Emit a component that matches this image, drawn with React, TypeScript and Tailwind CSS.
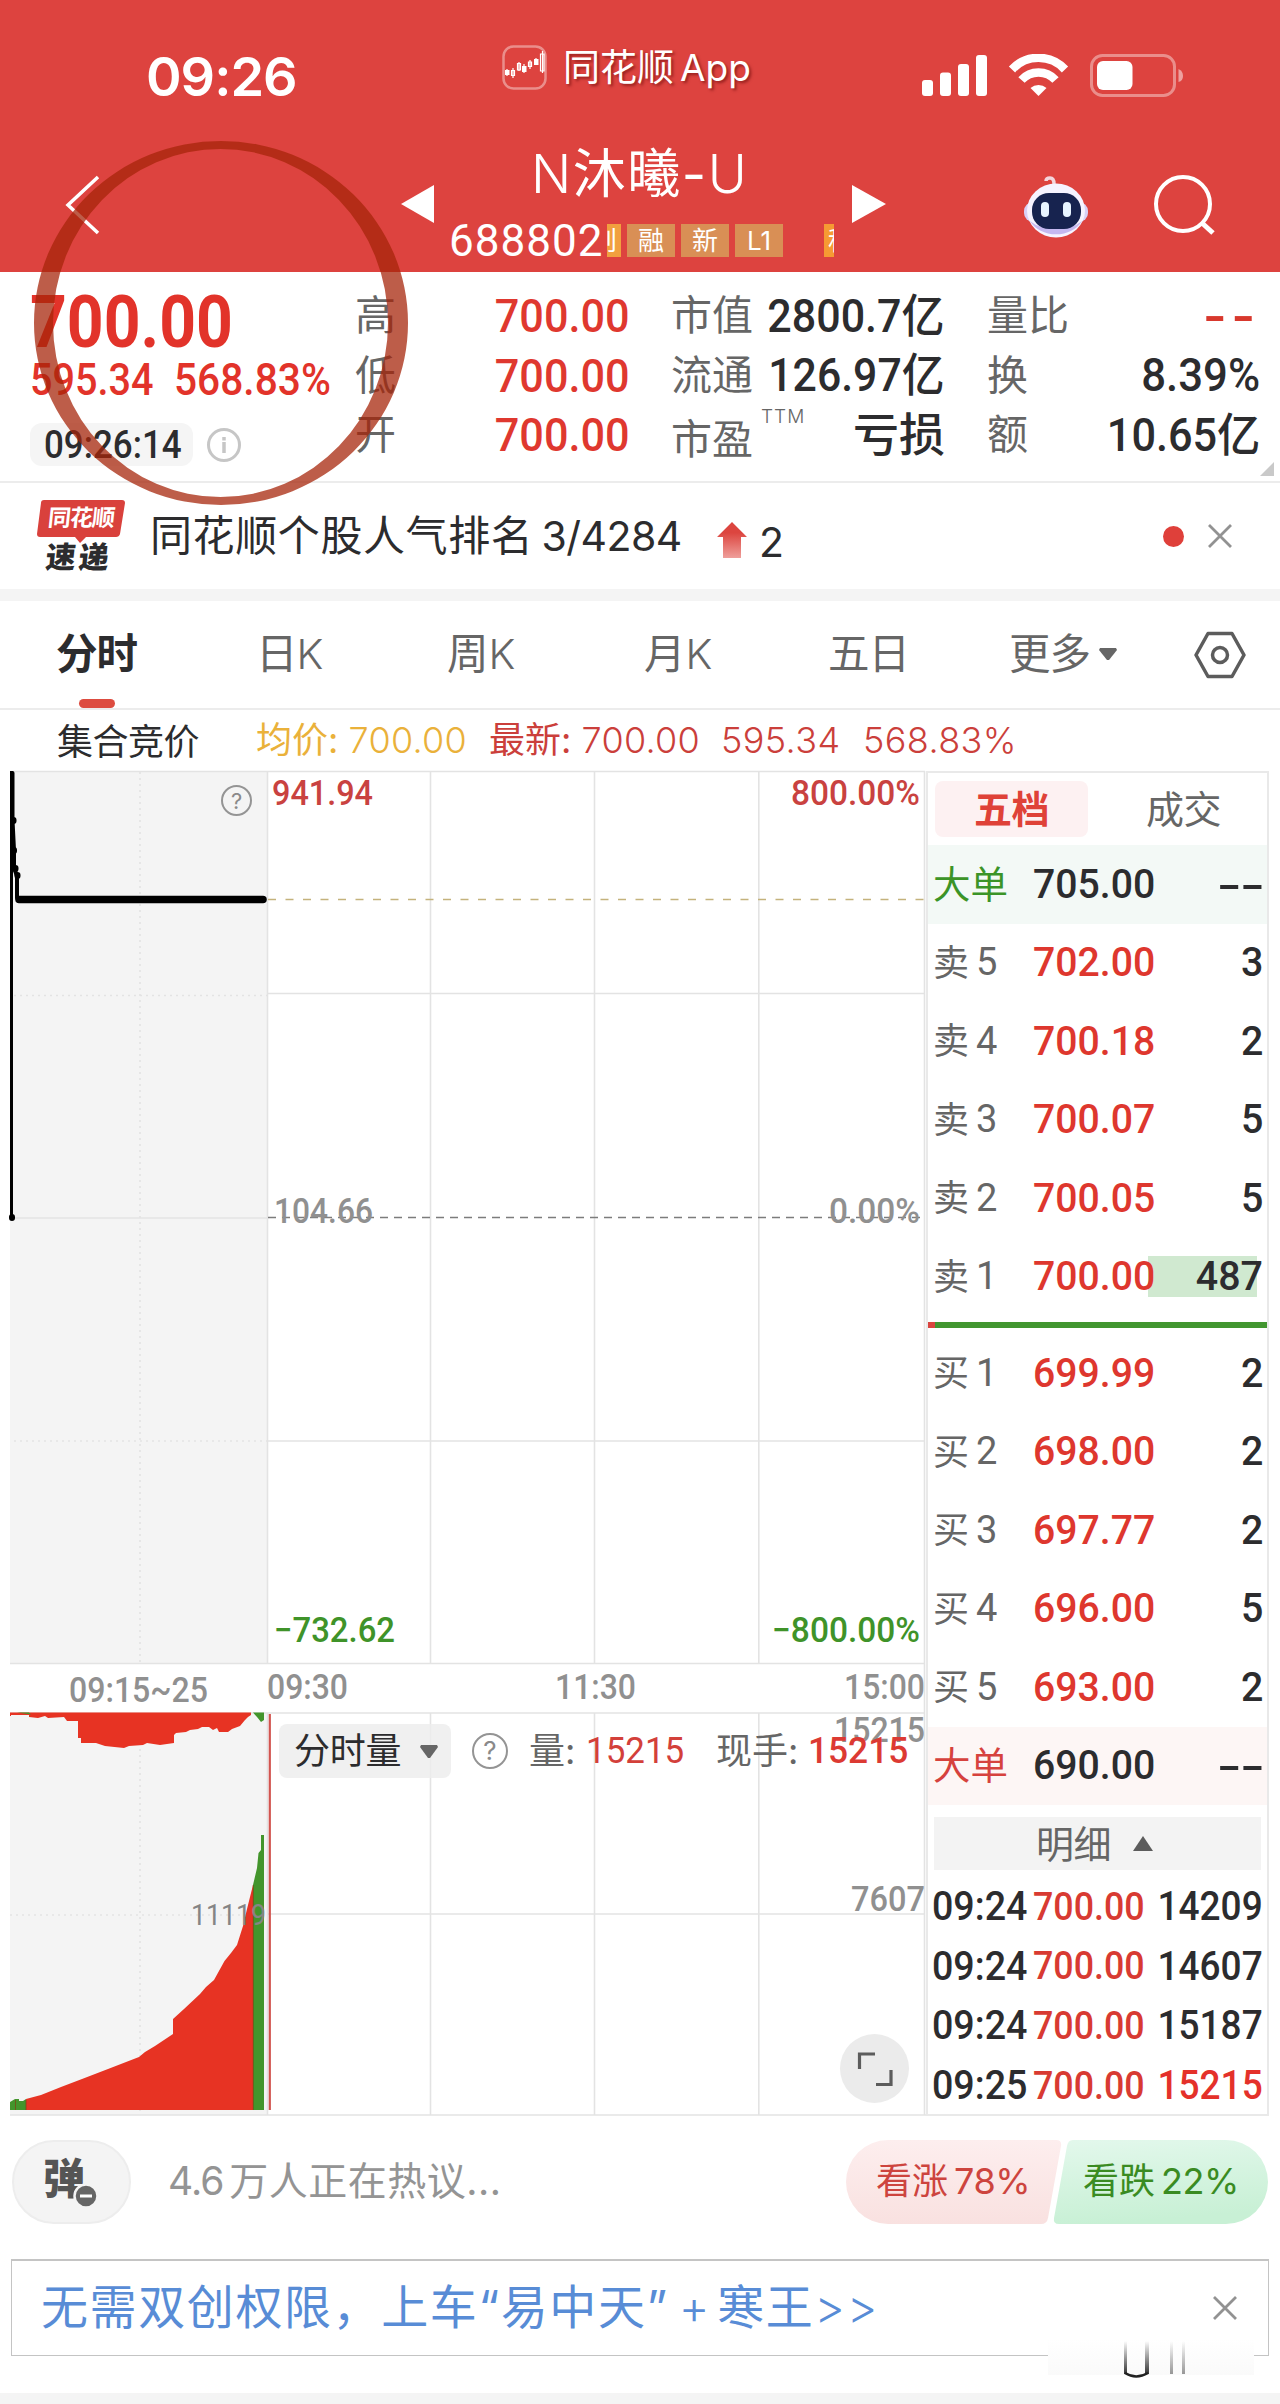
import type { ReactNode } from "react";
import { clsx } from "clsx";

interface Level {
  label: string;
  index: number;
  price: string;
  volume: string;
}

const asks: Level[] = [
  { label: "卖", index: 5, price: "702.00", volume: "3" },
  { label: "卖", index: 4, price: "700.18", volume: "2" },
  { label: "卖", index: 3, price: "700.07", volume: "5" },
  { label: "卖", index: 2, price: "700.05", volume: "5" },
  { label: "卖", index: 1, price: "700.00", volume: "487" },
];

const bids: Level[] = [
  { label: "买", index: 1, price: "699.99", volume: "2" },
  { label: "买", index: 2, price: "698.00", volume: "2" },
  { label: "买", index: 3, price: "697.77", volume: "2" },
  { label: "买", index: 4, price: "696.00", volume: "5" },
  { label: "买", index: 5, price: "693.00", volume: "2" },
];

const trades = [
  { time: "09:24", price: "700.00", volume: "14209" },
  { time: "09:24", price: "700.00", volume: "14607" },
  { time: "09:24", price: "700.00", volume: "15187" },
  { time: "09:25", price: "700.00", volume: "15215", up: true },
];

function Num({ className, children }: { className?: string; children: ReactNode }) {
  return (
    <span
      className={clsx(
        "inline-block whitespace-nowrap font-['Roboto','Noto_Sans_CJK_SC',sans-serif] leading-none",
        className
      )}
    >
      {children}
    </span>
  );
}

function StatusBar() {
  return (
    <div className="flex h-[144px] items-start text-white">
      <div className="ml-[146px] mt-[50px] w-[356px] text-[54px] font-semibold leading-none tracking-[-1px]">09:26</div>
      <svg className="mt-[45px] h-[45px] w-[45px]" viewBox="0 0 45 45" fill="none" stroke="white">
        <rect x="1.5" y="1.5" width="42" height="42" rx="10" strokeWidth="2.5" opacity="0.4" />
        <path
          strokeWidth="1.2"
          d="M5 24v7M11 23v10M17 17v9M22 19v9M28 15v9M34 13v7M9.500 25.500h3v5h-3zM15.500 18.500h3v6.500h-3zM26.500 17h3v4.500h-3zM38.500 9h3.500v17h-3.500zM40.500 6v22"
        />
        <path fill="white" stroke="none" d="M3 25h4.500v5H3zM20 21h4.500v6H20zM32 14h4.500v6H32z" />
      </svg>
      <div className="ml-[16px] mt-[49px] w-[359px] whitespace-nowrap text-[37px] leading-none [text-shadow:2px_2px_3px_rgba(90,0,0,0.55)]">
        同花顺<span className="ml-1.5">App</span>
      </div>
      <svg className="mt-[54px] h-[44px] w-[262px]" viewBox="0 0 262 44" fill="white">
        <rect x="0" y="26" width="11" height="16" rx="3" />
        <rect x="18" y="18.500" width="11" height="23.500" rx="3" />
        <rect x="36" y="10" width="11" height="32" rx="3" />
        <rect x="54" y="1" width="11" height="41" rx="3" />
        <g fill="none" stroke="white" strokeWidth="8.500">
          <path d="M90 15.500a36 36 0 0 1 53 0" />
          <path d="M99.500 26a23 23 0 0 1 34 0" />
        </g>
        <path d="M108.500 34a12 12 0 0 1 16 0l-8 8z" />
        <rect x="169.500" y="1.500" width="83" height="40" rx="11" fill="none" stroke="white" strokeWidth="3" opacity="0.4" />
        <rect x="175" y="7" width="35.500" height="29" rx="6" />
        <path d="M256.500 15q4.500 2 4.500 7t-4.500 6z" opacity="0.5" />
      </svg>
    </div>
  );
}

function Tag({ className, children }: { className?: string; children: ReactNode }) {
  return (
    <span className={clsx("mr-1.5 flex h-[33px] shrink-0 items-center overflow-hidden text-[26px] leading-none", className)}>
      {children}
    </span>
  );
}

function RobotIcon() {
  return (
    <svg className="h-[66px] w-[66px]" viewBox="0 0 66 66">
      <path d="M31 10q0-6-4-6t-4 3" fill="none" stroke="#f3d5dc" strokeWidth="3.500" />
      <rect x="1" y="28" width="64" height="20" rx="9" fill="#d9d0f6" />
      <ellipse cx="33" cy="36.500" rx="29" ry="27" fill="#f6f3ff" />
      <path d="M7 47a29 24 0 0 0 52 0l-6 4q-20 8-40 0z" fill="#c5b8f0" />
      <rect x="9" y="19" width="49" height="36" rx="17" fill="#17234f" />
      <rect x="18" y="28" width="8" height="15" rx="4" fill="#e8f4ff" />
      <rect x="40" y="28" width="8" height="15" rx="4" fill="#e8f4ff" />
    </svg>
  );
}

function TitleBar() {
  return (
    <div className="flex h-[128px] items-start text-white">
      <svg className="ml-[64px] mt-[30px] h-[62px] w-[36px]" viewBox="0 0 36 62" fill="none" stroke="white" strokeWidth="3.500">
        <path d="M34 3L4 31l30 28" />
      </svg>
      <svg className="ml-[301px] mt-[41px] h-[38px] w-[33px]" viewBox="0 0 33 38" fill="white">
        <path d="M0 19L33 0v38z" />
      </svg>
      <div className="ml-[15px] w-[403px]">
        <div className="ml-[82px] whitespace-nowrap text-[53px] leading-[60px] tracking-[1.500px]">
          <span className="font-light">N</span>沐曦-<span className="font-light">U</span>
        </div>
        <div className="mt-[20px] flex h-[33px] items-center">
          <Num className="w-[158px] text-[44px] tracking-[1px]">688802</Num>
          <Tag className="w-[14px] justify-end bg-[#f1a03f] pr-1">创</Tag>
          <Tag className="w-[48px] justify-center bg-[#d98f55]">融</Tag>
          <Tag className="w-[48px] justify-center bg-[#d98f55]">新</Tag>
          <Tag className="mr-[41px] w-[48px] justify-center bg-[#d98f55]">L1</Tag>
          <Tag className="w-[10px] bg-[#f69a33]">
            <span className="ml-1">科</span>
          </Tag>
        </div>
      </div>
      <svg className="mt-[41px] h-[38px] w-[34px]" viewBox="0 0 34 38" fill="white">
        <path d="M0 0l34 19L0 38z" />
      </svg>
      <div className="ml-[137px] mt-[30px]">
        <RobotIcon />
      </div>
      <svg className="ml-[64px] mt-[30px] h-[62px] w-[64px]" viewBox="0 0 64 62" fill="none" stroke="white" strokeWidth="4">
        <circle cx="30" cy="30" r="27" />
        <path d="M49 49l11 10" strokeWidth="5" />
      </svg>
    </div>
  );
}

function Quote() {
  const label = "text-[41px] leading-none text-[#666]";
  const row = "flex h-[59.5px] items-center justify-between";
  return (
    <section className="relative flex h-[211px] border-b-2 border-[#ececec] pt-[14px] text-[#2c2c2e]">
      <div className="ml-[30px] w-[325px] shrink-0 text-[#e2332a]">
        <div className="h-[65px]">
          <Num className="origin-left scale-x-[0.88] text-[73px] font-bold">700.00</Num>
        </div>
        <div className="flex h-[60px] items-center">
          <Num className="w-[144px] origin-left scale-x-[0.91] text-[43.5px] font-medium">595.34</Num>
          <Num className="origin-left scale-x-[0.935] text-[43.5px] font-medium">568.83%</Num>
        </div>
        <div className="mt-[12px] flex h-[43px] items-center">
          <div className="flex h-[43px] w-[163px] items-center rounded-xl bg-[#f5f5f5] pl-[14px] text-[#2c2c2e]">
            <Num className="origin-left scale-x-[0.92] text-[38px] font-medium">09:26:14</Num>
          </div>
          <svg className="ml-[13px] h-[36px] w-[36px]" viewBox="0 0 36 36" fill="none" stroke="#c6c6c6" strokeWidth="3">
            <circle cx="18" cy="18" r="15.500" />
            <path d="M18 15v11M18 10v3.500" strokeWidth="3.500" />
          </svg>
        </div>
      </div>
      <div className="w-[275px] shrink-0 text-[#df382f]">
        {["高", "低", "开"].map((name) => (
          <div key={name} className={row}>
            <span className={label}>{name}</span>
            <Num className="origin-right scale-x-[0.92] text-[47px] font-medium">700.00</Num>
          </div>
        ))}
      </div>
      <div className="ml-[41px] w-[274px] shrink-0">
        <div className={row}>
          <span className={label}>市值</span>
          <Num className="origin-right scale-x-[0.935] text-[46px] font-medium">2800.7亿</Num>
        </div>
        <div className={row}>
          <span className={label}>流通</span>
          <Num className="origin-right scale-x-[0.93] text-[46px] font-medium">126.97亿</Num>
        </div>
        <div className={row}>
          <span className={clsx(label, "flex pt-2.5")}>
            市盈<sup className="top-0 ml-2 mt-[-12px] text-[19px] leading-none font-light tracking-[1px]">TTM</sup>
          </span>
          <Num className="text-[46px] font-medium">亏损</Num>
        </div>
      </div>
      <div className="ml-[42px] w-[273px] shrink-0">
        <div className={row}>
          <span className={label}>量比</span>
          <span className="origin-right scale-x-110 text-[47px] font-semibold leading-none tracking-[4px] text-[#d8382d]">--</span>
        </div>
        <div className={row}>
          <span className={label}>换</span>
          <Num className="origin-right scale-x-[0.95] text-[46px] font-medium">8.39%</Num>
        </div>
        <div className={row}>
          <span className={label}>额</span>
          <Num className="origin-right scale-x-[0.94] text-[46px] font-medium">10.65亿</Num>
        </div>
      </div>
      <svg className="absolute bottom-[5px] right-[6px] h-[14px] w-[14px]" viewBox="0 0 14 14" fill="#c9c9c9">
        <path d="M14 0v14H0z" />
      </svg>
    </section>
  );
}

function CloseIcon() {
  return (
    <svg className="h-[24px] w-[24px]" viewBox="0 0 24 24" fill="none" stroke="#929292" strokeWidth="2.800">
      <path d="M1 1l22 22M23 1L1 23" />
    </svg>
  );
}

function NewsFlash() {
  return (
    <section className="flex h-[106px] items-center">
      <div className="ml-[37px] flex w-[113px] flex-col">
        <div className="relative flex h-[37px] w-[88px] items-center justify-center">
          <svg className="absolute left-0 top-0 h-[44px] w-[88px]" viewBox="0 0 88 44" fill="#d9413c">
            <path d="M7 0h78q3 0 3 3l-5 31q-1 3-4 3H49l-6 6-5-6H3q-3 0-3-3L4 3q0-3 3-3z" />
          </svg>
          <span className="relative -skew-x-6 text-[23px] font-bold leading-none tracking-[-1px] text-white">同花顺</span>
        </div>
        <span className="ml-[9px] mt-[4px] -skew-x-6 whitespace-nowrap text-[30px] font-black leading-[32px] tracking-[3px] text-[#2c2c2e]">
          速递
        </span>
      </div>
      <div className="flex w-[567px] items-center whitespace-nowrap text-[42px] leading-none tracking-[0.600px] text-[#2c2c2e]">
        同花顺个股人气排名<span className="ml-2 text-[41px] tracking-[-0.500px]">3/4284</span>
      </div>
      <svg className="mt-[8px] h-[36px] w-[30px]" viewBox="0 0 30 36">
        <defs>
          <linearGradient id="rise" x1="0" y1="0" x2="0" y2="1">
            <stop offset="0.300" stopColor="#dc453f" />
            <stop offset="1" stopColor="#ef9f9b" />
          </linearGradient>
        </defs>
        <path d="M15 0l15 15h-6v21H6V15H0z" fill="url(#rise)" />
      </svg>
      <span className="ml-[12px] mt-[12px] w-[404px] text-[41px] leading-none text-[#2c2c2e]">2</span>
      <span className="h-[21px] w-[21px] rounded-full bg-[#df403a]" />
      <div className="ml-[24px]">
        <CloseIcon />
      </div>
    </section>
  );
}

function PeriodTabs() {
  return (
    <nav className="flex h-[109px] items-center border-b-2 border-[#ececec] text-[41.5px] leading-none text-[#666]">
      <div className="relative ml-[56px] flex h-full w-[200px] items-center font-bold tracking-[-1px] text-[#2c2c2e]">
        分时
        <span className="absolute bottom-0 left-[23px] h-[9px] w-[36px] rounded-[5px] bg-[#dd4c40]" />
      </div>
      <div className="w-[191px] tracking-[-1px]">
        日<span className="font-light">K</span>
      </div>
      <div className="w-[197px]">
        周<span className="font-light">K</span>
      </div>
      <div className="w-[184px]">
        月<span className="font-light">K</span>
      </div>
      <div className="w-[181px] tracking-[-1px]">五日</div>
      <div className="flex w-[185px] items-center tracking-[-1px]">
        更多
        <svg className="ml-[9px] h-[13px] w-[18px]" viewBox="0 0 18 13" fill="#666">
          <path d="M1 0h16l1 2-8 10h-2L0 2z" />
        </svg>
      </div>
      <svg className="h-[48px] w-[52px]" viewBox="0 0 52 48" fill="none" stroke="#5c5c5c" strokeWidth="3.500" strokeLinejoin="round">
        <path d="M14 2.500h24L50 24 38 45.500H14L2 24z" />
        <circle cx="26" cy="24" r="7.500" />
      </svg>
    </nav>
  );
}

function PriceSummary() {
  return (
    <div className="flex h-[60px] items-center whitespace-nowrap text-[36px] leading-none text-[#cb3f3b]">
      <span className="ml-[57px] w-[199px] pt-1 tracking-[-0.500px] text-[#2c2c2e]">集合竞价</span>
      <span className="w-[233px] text-[#eab13a]">
        均价: <span className="font-light tracking-[0.300px]">700.00</span>
      </span>
      <span className="w-[232px]">
        最新: <span className="font-light tracking-[0.300px]">700.00</span>
      </span>
      <span className="w-[142px] font-light tracking-[0.400px]">595.34</span>
      <span className="font-light tracking-[0.400px]">568.83%</span>
    </div>
  );
}

const chartText = "font-['Roboto','Noto_Sans_CJK_SC',sans-serif]";

// 分时走势 + 成交量，坐标沿用页面像素
function IntradayChart() {
  return (
    <svg className="block h-[1346px] w-[926px]" viewBox="0 770 926 1346">
      <rect x="10" y="771" width="257" height="893" fill="#f4f4f4" />
      <rect x="10" y="1713" width="257" height="402" fill="#f4f4f4" />
      <g stroke="#e3e3e3" strokeWidth="1.600" fill="none">
        <path d="M10 771.500H925M267 993.500H925M267 1441H925M10 1663.500H925M10 1713H925M267 1914H925M10 2115H926M14 1218H267" />
        <path d="M267.500 771V1664M430.500 771V1664M594.500 771V1664M758.800 771V1664M924.500 771V2115" />
        <path d="M267.500 1713V2115M430.500 1713V2115M594.500 1713V2115M758.800 1713V2115" />
        <path strokeDasharray="2 4" d="M140 772V1664M140 1713V2115M14 995.500H267M14 1441H267M10 1915H267" />
      </g>
      <path d="M268 899.500H925" stroke="#c4b27c" strokeWidth="1.600" strokeDasharray="8 9.500" />
      <path d="M268 1217.500H925" stroke="#7c7c7c" strokeWidth="1.600" strokeDasharray="8 6" />

      <g fill="none" stroke="#000" strokeLinecap="round" strokeLinejoin="round">
        <path d="M11.500 771V1218" strokeWidth="3" strokeLinecap="butt" />
        <path d="M12.500 773V820L14 850V868L17 876V898" strokeWidth="4" />
        <path d="M13.500 820v1M14 850v1M15.500 868v1M17.500 875v1M12 1217v1" strokeWidth="6" />
        <path d="M19 899.500H263" strokeWidth="7.500" />
      </g>

      <g className={chartText} fontSize="35" fontWeight="500">
        <g fill="#c94240">
          <text x="272" y="805" textLength="101" lengthAdjust="spacingAndGlyphs">941.94</text>
          <text x="791" y="805" textLength="129" lengthAdjust="spacingAndGlyphs">800.00%</text>
        </g>
        <g fill="#3f9329">
          <text x="274" y="1642" textLength="121" lengthAdjust="spacingAndGlyphs">−732.62</text>
          <text x="772" y="1642" textLength="148" lengthAdjust="spacingAndGlyphs">−800.00%</text>
        </g>
        <g fill="#909090">
          <text x="274" y="1223" textLength="99" lengthAdjust="spacingAndGlyphs">104.66</text>
          <text x="829" y="1223" textLength="91" lengthAdjust="spacingAndGlyphs">0.00%</text>
          <text x="69" y="1702" textLength="139" lengthAdjust="spacingAndGlyphs">09:15~25</text>
          <text x="267" y="1699" textLength="81" lengthAdjust="spacingAndGlyphs">09:30</text>
          <text x="555" y="1699" textLength="81" lengthAdjust="spacingAndGlyphs">11:30</text>
          <text x="844" y="1699" textLength="81" lengthAdjust="spacingAndGlyphs">15:00</text>
          <text x="834" y="1742" textLength="91" lengthAdjust="spacingAndGlyphs">15215</text>
          <text x="851" y="1911" textLength="74" lengthAdjust="spacingAndGlyphs">7607</text>
        </g>
      </g>

      <path
        fill="#e73323"
        d="M10 1712.500H251V1715L248 1717 245 1720 240 1726 232 1729 228 1732H219L217 1728 213 1730 209 1727H202L198 1729 190 1730 186 1732 176 1733 174 1735V1743L160 1745 147 1743 143 1745 129 1746 124 1748 105 1746 96 1743 81 1743V1738H78V1721H67L64 1717 48 1718 45 1716 38 1718 29 1717V1715H11V1716H10z"
      />
      <path fill="#43952c" d="M17 1712.500h12l2 2zM253 1712.500H264V1720L261 1722 257 1717z" />
      <path
        fill="#e73323"
        d="M26 2110V2099L41 2095 61 2087 82 2079 108 2069 139 2057 145 2052 155 2046 167 2038 173 2034V2019L184 2009 200 1994 206 1987 214 1980 224.500 1961 231 1953 237 1945 243 1926 247 1909 250 1897 253 1885V2110z"
      />
      <path fill="#43952c" d="M253 2110V1885L257 1868 258.500 1853 261 1850V1835H264V2110zM10 2110V2102L15 2099H19V2101H23L26 2099V2110z" />
      <path d="M253.300 1885V2110M26 2100V2110M15.500 2100V2110" stroke="#7a4a14" strokeWidth="0.800" />
      <path d="M269.800 1714V2110" stroke="#d2544f" strokeWidth="2.200" />
      <text className={chartText} x="191" y="1925" fontSize="29" fill="#858585" textLength="75" lengthAdjust="spacingAndGlyphs">
        11119
      </text>
    </svg>
  );
}

function HelpIcon({ className }: { className?: string }) {
  return (
    <span
      className={clsx(
        "flex items-center justify-center rounded-full border-[2px] border-[#949494] leading-none text-[#8a8a8a]",
        className
      )}
    >
      ?
    </span>
  );
}

function ChartPanel() {
  return (
    <div className="relative w-[926px] shrink-0">
      <IntradayChart />
      <HelpIcon className="absolute left-[221px] top-[15px] h-[31px] w-[31px] text-[22px]" />
      <div className="absolute left-[279px] top-[954px] flex h-[54px] items-center whitespace-nowrap text-[36px] leading-none text-[#666]">
        <div className="flex h-full w-[172px] items-center rounded-lg bg-[#ececec]/80 pl-[15px] tracking-[-0.300px] text-[#2c2c2e]">
          分时量
          <svg className="ml-[19px] h-[13px] w-[18px]" viewBox="0 0 18 13" fill="#666">
            <path d="M1 0h16l1 2-8 11h-2L0 2z" />
          </svg>
        </div>
        <HelpIcon className="ml-[21px] h-[36px] w-[36px] text-[26px]" />
        <span className="ml-[21px] w-[57px]">量:</span>
        <Num className="w-[130px] origin-left scale-x-[0.97] text-[36px] text-[#d3403a]">15215</Num>
        <span className="w-[92px]">现手:</span>
        <Num className="origin-left scale-x-[0.98] text-[36px] font-medium text-[#dc3a33]">15215</Num>
      </div>
      <button className="absolute bottom-[13px] left-[840px] flex h-[69px] w-[69px] items-center justify-center rounded-full bg-[#ebebeb]">
        <svg className="h-[36px] w-[36px]" viewBox="0 0 36 36" fill="none" stroke="#5c5c5c" strokeWidth="3.200">
          <path d="M18 3H2.500V18M34 19V33.500H19" />
        </svg>
      </button>
    </div>
  );
}

function LevelRow({ level }: { level: Level }) {
  return (
    <div className="relative flex h-[78.5px] items-center pl-[5px] pr-[4px]">
      {level.volume === "487" && <span className="absolute left-[220px] top-[18px] h-[41px] w-[109px] bg-[#d0e9d0]" />}
      <div className="flex w-[100px] items-center whitespace-nowrap text-[36px] leading-none text-[#666]">
        {level.label}
        <Num className="ml-[7px] mt-[-1px] text-[38px]">{level.index}</Num>
      </div>
      <Num className="relative origin-left scale-x-[0.955] text-[41px] font-medium text-[#de372e]">{level.price}</Num>
      <Num className="relative ml-auto origin-right scale-x-[0.96] text-[41px] font-medium text-[#2c2c2e]">{level.volume}</Num>
    </div>
  );
}

function BigOrderRow({ price, side }: { price: string; side: "ask" | "bid" }) {
  return (
    <div className={clsx("flex h-[78.5px] items-center pl-[5px] pr-[4px]", side === "ask" ? "bg-[#f3f9f6]" : "bg-[#fdf6f5]")}>
      <span className={clsx("w-[100px] text-[37.5px] leading-none", side === "ask" ? "text-[#3b9427]" : "text-[#d6423d]")}>
        大单
      </span>
      <Num className="origin-left scale-x-[0.955] text-[41px] font-medium text-[#2c2c2e]">{price}</Num>
      <span className="ml-auto origin-right scale-x-[1.3] text-[43px] font-medium leading-none tracking-[-2px] text-[#2c2c2e]">
        --
      </span>
    </div>
  );
}

function OrderBook() {
  return (
    <aside className="mt-[1px] h-[1345px] w-[343px] border-2 border-[#e9e9e9]">
      <div className="flex h-[72px] items-center pl-[7px] text-[38px] leading-none">
        <div className="flex h-[56px] w-[153px] shrink-0 items-center justify-center rounded-lg bg-[#fdf1f2] font-bold tracking-[-0.500px] text-[#df4238]">
          五档
        </div>
        <div className="ml-[58px] tracking-[-0.500px] text-[#666]">成交</div>
      </div>
      <BigOrderRow side="ask" price="705.00" />
      {asks.map((level) => (
        <LevelRow key={level.index} level={level} />
      ))}
      <div className="flex h-[18px] items-center">
        <span className="h-[6px] w-[7px] bg-[#d9453f]" />
        <span className="h-[6px] flex-1 bg-[#429630]" />
      </div>
      {bids.map((level) => (
        <LevelRow key={level.index} level={level} />
      ))}
      <BigOrderRow side="bid" price="690.00" />
      <div className="mx-[6px] mb-[7px] mt-[12px] flex h-[53px] items-center justify-center bg-[#f3f3f3] text-[38px] leading-none tracking-[-0.500px] text-[#666]">
        <span className="ml-[-6px]">明细</span>
        <svg className="ml-[22px] h-[15px] w-[20px]" viewBox="0 0 20 15" fill="#5c5c5c">
          <path d="M10 0l10 15H0z" />
        </svg>
      </div>
      {trades.map((t) => (
        <div key={t.volume} className="flex h-[59.7px] items-center pl-[4px] pr-[4px] text-[#2c2c2e]">
          <Num className="w-[101px] shrink-0 origin-left scale-x-[0.94] text-[40px] font-medium">{t.time}</Num>
          <Num className="w-[106px] shrink-0 origin-left scale-x-[0.93] text-[38.5px] font-medium text-[#d83a32]">{t.price}</Num>
          <Num className={clsx("ml-auto origin-right scale-x-[0.925] text-[40px] font-medium", t.up && "text-[#e4312a]")}>
            {t.volume}
          </Num>
        </div>
      ))}
    </aside>
  );
}

function CommentBar() {
  return (
    <section className="mt-[24px] flex h-[84px] items-center">
      <div className="relative ml-[12px] flex h-[84px] w-[119px] items-center rounded-[42px] border-2 border-[#ededed] bg-[#f4f4f4] pl-[29px]">
        <span className="pb-1.5 text-[42px] font-black leading-none text-[#555]">弹</span>
        <svg className="absolute left-[59px] top-[41px] h-[26px] w-[26px]" viewBox="0 0 26 26">
          <circle cx="13" cy="13" r="11.500" fill="#666" stroke="#f4f4f4" strokeWidth="2.500" />
          <path d="M7 13h12" stroke="white" strokeWidth="3" />
        </svg>
      </div>
      <div className="ml-[37px] w-[678px] whitespace-nowrap pb-1 text-[39px] leading-none tracking-[0.500px] text-[#949494]">
        <span className="mr-1.5 tracking-[-1px]">4.6</span>万人正在热议...
      </div>
      <div className="relative h-[84px] w-[423px]">
        <svg className="absolute inset-0 h-[84px] w-[423px]" viewBox="0 0 423 84">
          <defs>
            <linearGradient id="bull" x1="0" y1="0" x2="0" y2="1">
              <stop offset="0" stopColor="#fdeeee" />
              <stop offset="1" stopColor="#f9e1e0" />
            </linearGradient>
            <linearGradient id="bear" x1="0" y1="0" x2="0.200" y2="1">
              <stop offset="0" stopColor="#e3f8ec" />
              <stop offset="1" stopColor="#c8f0d5" />
            </linearGradient>
          </defs>
          <path d="M42 0H210q6 0 5 6L202 78q-1 6-7 6H42a42 42 0 0 1 0-84z" fill="url(#bull)" />
          <path d="M227 0H380a42 42 0 0 1 0 84H213q-6 0-5-6L221 6q1-6 6-6z" fill="url(#bear)" />
        </svg>
        <div className="relative flex h-full items-center whitespace-nowrap pb-0.5 text-[36px] leading-none">
          <span className="ml-[30px] w-[207px] text-[#cd443e]">
            看涨<span className="ml-[6px] tracking-[-0.500px]">78%</span>
          </span>
          <span className="text-[#3a8b22]">
            看跌<span className="ml-[6px] tracking-[-0.500px]">22%</span>
          </span>
        </div>
      </div>
    </section>
  );
}

function Promo() {
  return (
    <section className="relative mx-[11px] mt-[35px] flex h-[97px] items-center border border-t-2 border-[#c4c4c4]">
      <span className="ml-[29px] whitespace-nowrap pb-1 text-[47px] leading-none tracking-[1.600px] text-[#588cd6]">
        无需双创权限，上车“易中天”<span className="ml-[10px] mr-[6px] font-light">+</span>寒王<span className="font-light">&gt;&gt;</span>
      </span>
      <div className="ml-auto mr-[31px]">
        <CloseIcon />
      </div>
      <svg className="absolute left-[1036px] top-[78px] h-[42px] w-[208px]" viewBox="0 0 208 42">
        <defs>
          <linearGradient id="fade" x1="0" y1="0" x2="0" y2="1">
            <stop offset="0" stopColor="#fff" />
            <stop offset="1" stopColor="#333" />
          </linearGradient>
          <linearGradient id="haze" x1="0" y1="0" x2="0" y2="1">
            <stop offset="0" stopColor="#fff" />
            <stop offset="1" stopColor="#fafafa" />
          </linearGradient>
        </defs>
        <rect width="206" height="36" fill="url(#haze)" />
        <path d="M76 2h3v33h-3zM97 2h4v33h-4z" fill="url(#fade)" />
        <path d="M122 2h3v33h-3zM134 2h3v33h-3z" fill="url(#fade)" opacity="0.500" />
        <path d="M77 34q11 7 23 0" fill="none" stroke="#222" strokeWidth="2.500" />
      </svg>
    </section>
  );
}

export default function App() {
  return (
    <div className="relative h-[2404px] w-[1280px] overflow-hidden bg-white font-['Inter','Noto_Sans_CJK_SC',sans-serif]">
      <header className="h-[272px] bg-[#dd433f]">
        <StatusBar />
        <TitleBar />
      </header>
      <Quote />
      <NewsFlash />
      <div className="h-[12px] bg-[#f4f4f4]" />
      <PeriodTabs />
      <PriceSummary />
      <main className="flex">
        <ChartPanel />
        <OrderBook />
      </main>
      <CommentBar />
      <Promo />
      <div className="mt-[37px] h-[13px] bg-[#f4f4f4]" />
      {/* 圈出最新价的手绘标记 */}
      <svg className="absolute left-[30px] top-[138px] h-[370px] w-[382px]" viewBox="30 138 382 370">
        <path
          fill="#a62409"
          fillOpacity="0.740"
          fillRule="evenodd"
          d="M34 323a187 182 0 0 1 374 0a187 182 0 0 1-374 0zM53 323a167.500 174 0 0 0 335 0a167.500 174 0 0 0-335 0z"
        />
      </svg>
    </div>
  );
}
